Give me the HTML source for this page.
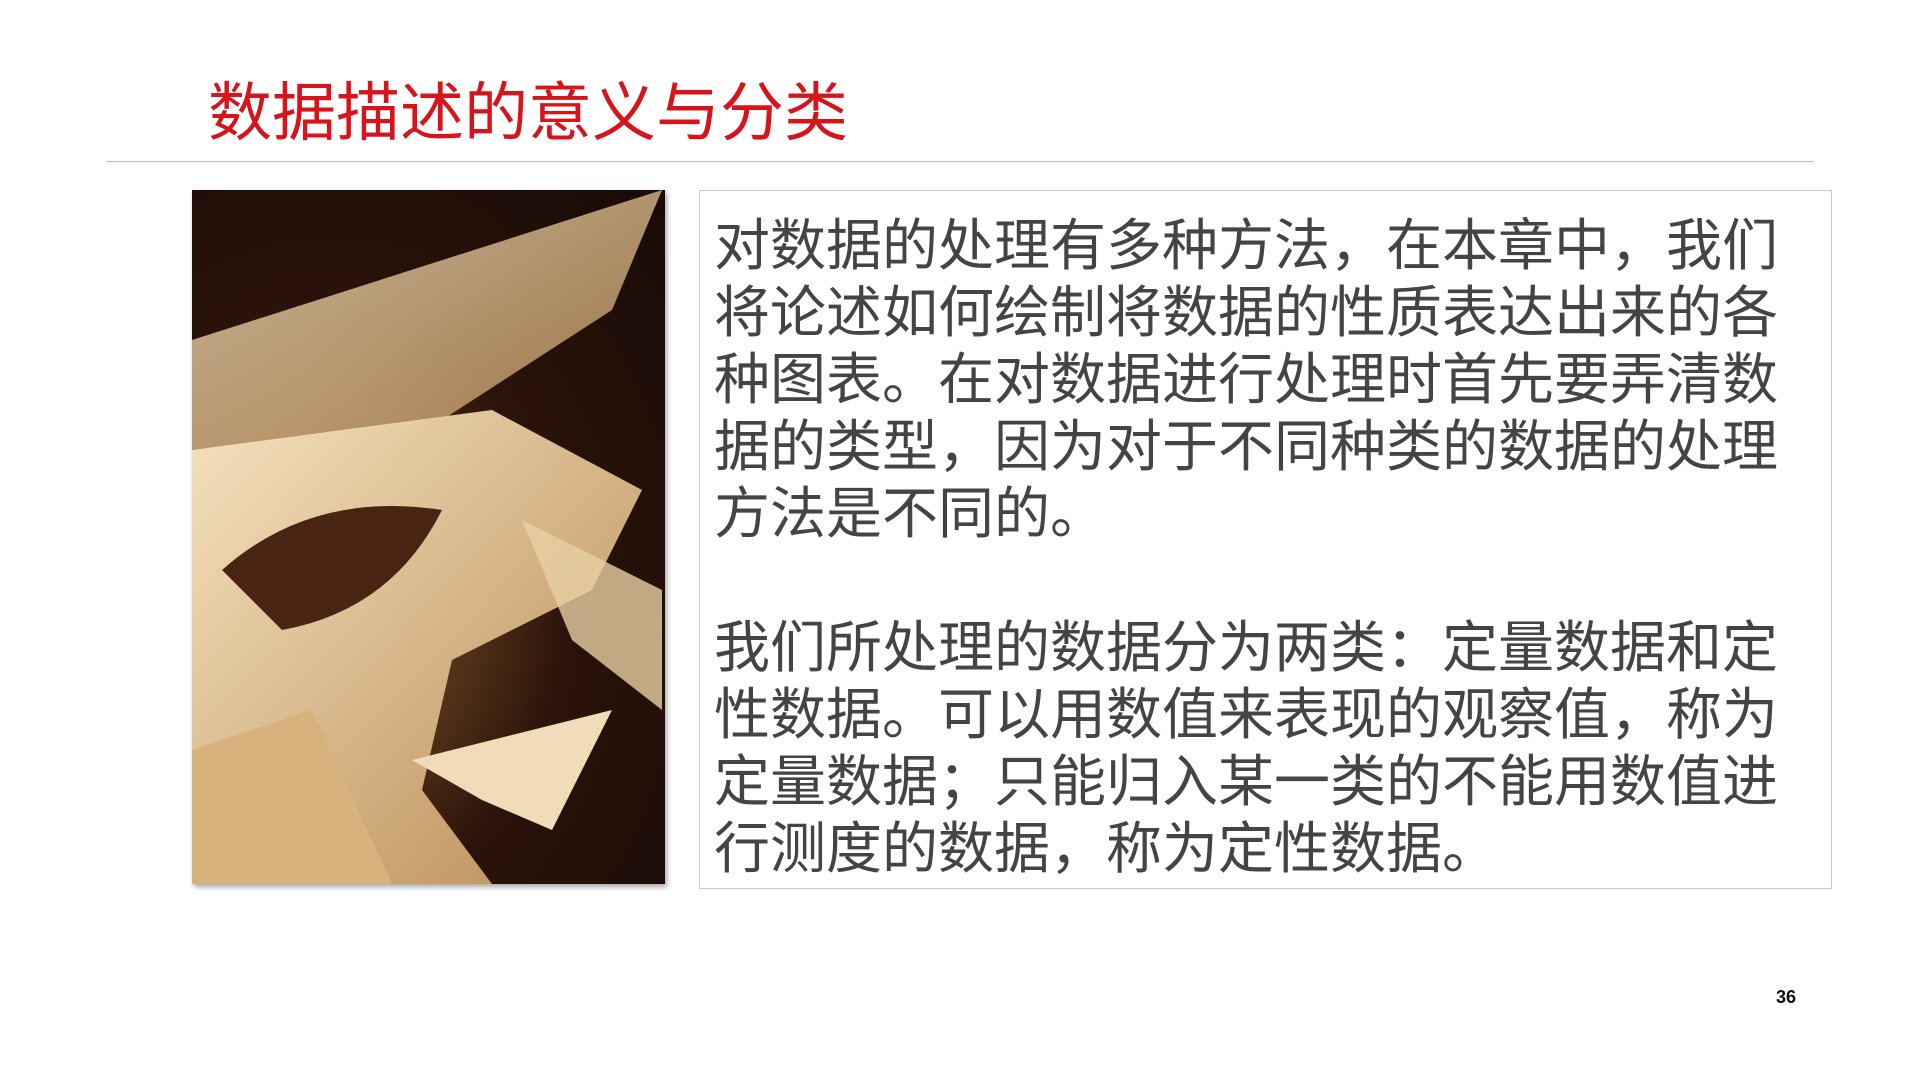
<!DOCTYPE html>
<html><head><meta charset="utf-8"><style>
body{margin:0;width:1920px;height:1080px;background:#fff;position:relative;overflow:hidden;font-family:"Liberation Sans","Noto Sans CJK SC",sans-serif}
.title{position:absolute;left:208px;top:73px;font-size:64px;color:#d7141b;letter-spacing:0px;line-height:80px;white-space:nowrap}
.line{position:absolute;left:106px;top:161px;width:1708px;height:1px;background:#bbb}
.img{position:absolute;left:192px;top:190px;width:473px;height:694px;box-shadow:2px 3px 5px rgba(0,0,0,.35);overflow:hidden;background:radial-gradient(ellipse at 30% 60%,#8a5a2a 0%,#2a130a 50%,#180a06 100%)}
.box{position:absolute;left:699px;top:190px;width:1133px;height:699px;border:1px solid #c8c8c8;box-sizing:border-box}
.txt{position:absolute;left:714px;top:212px;width:1110px;font-size:56px;line-height:67px;color:#444}
.pn{position:absolute;left:1776px;top:987px;font-size:18px;font-weight:bold;color:#111}
</style></head><body>
<div class="title">数据描述的意义与分类</div>
<div class="line"></div>
<div class="img"><svg width="473" height="694" viewBox="0 0 473 694">
<defs><linearGradient id="g" x1="0" y1="0" x2="1" y2="1"><stop offset="0" stop-color="#f5e2bf"/><stop offset="1" stop-color="#b88a52"/></linearGradient></defs>
<path d="M0 150 L470 0 L420 120 L250 230 L0 260Z" fill="url(#g)" opacity=".8"/>
<path d="M0 260 L300 220 L450 300 L400 400 L260 470 L230 600 L300 694 L0 694Z" fill="url(#g)"/>
<path d="M30 380 Q120 300 250 320 Q200 420 90 440Z" fill="#4a2412"/>
<path d="M220 570 L420 520 L360 640 L290 610Z" fill="#f0dcb8"/>
<path d="M0 560 L120 520 L200 694 L0 694Z" fill="#d8b27c"/>
<path d="M330 330 L470 400 L470 520 L380 450Z" fill="#e8cfa4" opacity=".8"/>
</svg></div>
<div class="box"></div>
<div class="txt">对数据的处理有多种方法，在本章中，我们将论述如何绘制将数据的性质表达出来的各种图表。在对数据进行处理时首先要弄清数据的类型，因为对于不同种类的数据的处理方法是不同的。<br><br>我们所处理的数据分为两类：定量数据和定性数据。可以用数值来表现的观察值，称为定量数据；只能归入某一类的不能用数值进行测度的数据，称为定性数据。</div>
<div class="pn">36</div>
</body></html>
